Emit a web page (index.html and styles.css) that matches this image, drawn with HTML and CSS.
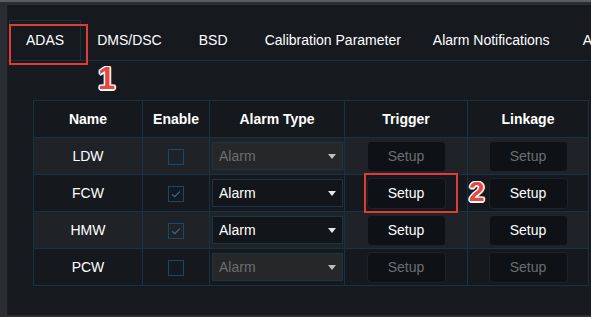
FILE: index.html
```html
<!DOCTYPE html>
<html>
<head>
<meta charset="utf-8">
<link rel="stylesheet" href="styles.css">
</head>
<body>
<div class="frame">
  <div class="panel">
    <div class="tabs">
      <div class="tab active">ADAS</div>
      <div class="tab">DMS/DSC</div>
      <div class="tab">BSD</div>
      <div class="tab">Calibration Parameter</div>
      <div class="tab">Alarm Notifications</div>
      <div class="tab">Alarm</div>
    </div>
    <table class="grid">
      <colgroup>
        <col class="c-name"><col class="c-enable"><col class="c-type"><col class="c-trigger"><col class="c-link">
      </colgroup>
      <thead>
        <tr><th>Name</th><th>Enable</th><th>Alarm Type</th><th>Trigger</th><th>Linkage</th></tr>
      </thead>
      <tbody>
        <tr class="alt">
          <td class="name">LDW</td>
          <td><span class="check"></span></td>
          <td><div class="select disabled">Alarm<span class="caret"></span></div></td>
          <td><button class="btn disabled">Setup</button></td>
          <td><button class="btn disabled">Setup</button></td>
        </tr>
        <tr>
          <td class="name">FCW</td>
          <td><span class="check on"><svg viewBox="0 0 16 16" width="14" height="14"><path d="M3.5 8.2 L6.6 11 L12.5 5" fill="none" stroke="#2a6d98" stroke-width="1.4"/></svg></span></td>
          <td><div class="select">Alarm<span class="caret"></span></div></td>
          <td><button class="btn">Setup</button></td>
          <td><button class="btn">Setup</button></td>
        </tr>
        <tr class="alt">
          <td class="name">HMW</td>
          <td><span class="check on"><svg viewBox="0 0 16 16" width="14" height="14"><path d="M3.5 8.2 L6.6 11 L12.5 5" fill="none" stroke="#2a6d98" stroke-width="1.4"/></svg></span></td>
          <td><div class="select">Alarm<span class="caret"></span></div></td>
          <td><button class="btn">Setup</button></td>
          <td><button class="btn">Setup</button></td>
        </tr>
        <tr>
          <td class="name">PCW</td>
          <td><span class="check"></span></td>
          <td><div class="select disabled">Alarm<span class="caret"></span></div></td>
          <td><button class="btn disabled">Setup</button></td>
          <td><button class="btn disabled">Setup</button></td>
        </tr>
      </tbody>
    </table>
  </div>
</div>
<div class="mark box1"></div>
<div class="mark box2"></div>
<div class="num n1">1</div>
<div class="num n2">2</div>
</body>
</html>
```
FILE: styles.css
```css
html, body {
  margin: 0;
  padding: 0;
}
body {
  width: 591px;
  height: 317px;
  overflow: hidden;
  background: #2a2e33;
  font-family: "Liberation Sans", Arial, sans-serif;
  font-size: 14px;
  color: #ffffff;
  position: relative;
}
.frame {
  border-top: 2px solid #5a5e62;
  height: 315px;
  padding: 3px 0 0 7px;
  box-sizing: border-box;
}
.panel {
  background: #161a1f;
  height: 100%;
  padding-top: 15px;
  box-sizing: border-box;
  border-left: 1px solid #1c2025;
}
.tabs {
  display: flex;
  height: 40px;
  border-bottom: 1px solid #1b3040;
  padding-left: 1px;
  white-space: nowrap;
  overflow: hidden;
}
.tab {
  min-width: 71px;
  padding: 0 16px;
  box-sizing: border-box;
  text-align: center;
  line-height: 40px;
  flex: none;
}
.tab.active {
  border: 1px solid #1b3040;
  border-bottom: none;
  line-height: 39px;
  height: 41px;
  background: #161a1f;
}
.grid {
  margin: 39px 0 0 25px;
  border-collapse: collapse;
  width: 555px;
  table-layout: fixed;
}
.c-name { width: 109px; }
.c-enable { width: 67px; }
.c-type { width: 135px; }
.c-trigger { width: 123px; }
.c-link { width: 121px; }
.grid th, .grid td {
  border: 1px solid #1a3142;
  height: 36px;
  padding: 0;
  text-align: center;
  vertical-align: middle;
}
.grid th {
  font-weight: bold;
  background: #15191e;
}
.grid tbody tr { background: #15191e; }
.grid tbody tr.alt { background: #1f2327; }
.name { font-weight: normal; }
.check {
  display: inline-flex;
  align-items: center;
  justify-content: center;
  width: 16px;
  height: 16px;
  border: 1px solid #1c4866;
  box-sizing: border-box;
  vertical-align: middle;
}
.check svg { display: block; }
.select {
  position: relative;
  width: 131px;
  height: 28px;
  margin-left: 2px;
  box-sizing: border-box;
  border: 1px solid #1a3448;
  background: #12161a;
  text-align: left;
  padding-left: 6px;
  line-height: 26px;
  color: #ffffff;
}
.select.disabled {
  background: #262728;
  color: #6b6e71;
}
.caret {
  position: absolute;
  right: 6px;
  top: 11px;
  width: 0;
  height: 0;
  border-left: 4px solid transparent;
  border-right: 4px solid transparent;
  border-top: 5px solid #e6e6e6;
}
.select.disabled .caret { border-top-color: #bdbdbd; }
.btn {
  width: 79px;
  height: 31px;
  border: 1px solid #1e2329;
  border-radius: 4px;
  background: #0e1216;
  color: #ffffff;
  font-family: "Liberation Sans", Arial, sans-serif;
  font-size: 14px;
  padding: 0;
  vertical-align: middle;
}
.btn.disabled { color: #6b6e71; }
.mark {
  position: absolute;
  border: 2px solid #e23b36;
  box-sizing: border-box;
}
.box1 { left: 9px; top: 24px; width: 79px; height: 41px; }
.box2 { left: 364px; top: 173px; width: 94px; height: 40px; }
.num {
  position: absolute;
  font-family: "Liberation Sans", Arial, sans-serif;
  font-weight: bold;
  color: #e8463f;
  text-shadow: -1px -1px 0 #fff, 1px -1px 0 #fff, -1px 1px 0 #fff, 1px 1px 0 #fff, 0 1.5px 0 #fff, 1.5px 0 0 #fff, 0 -1.5px 0 #fff, -1.5px 0 0 #fff;
  line-height: 1;
}
.n1 { left: 98px; top: 63px; font-size: 31px; }
.n2 { left: 469px; top: 178px; font-size: 28px; }
```
